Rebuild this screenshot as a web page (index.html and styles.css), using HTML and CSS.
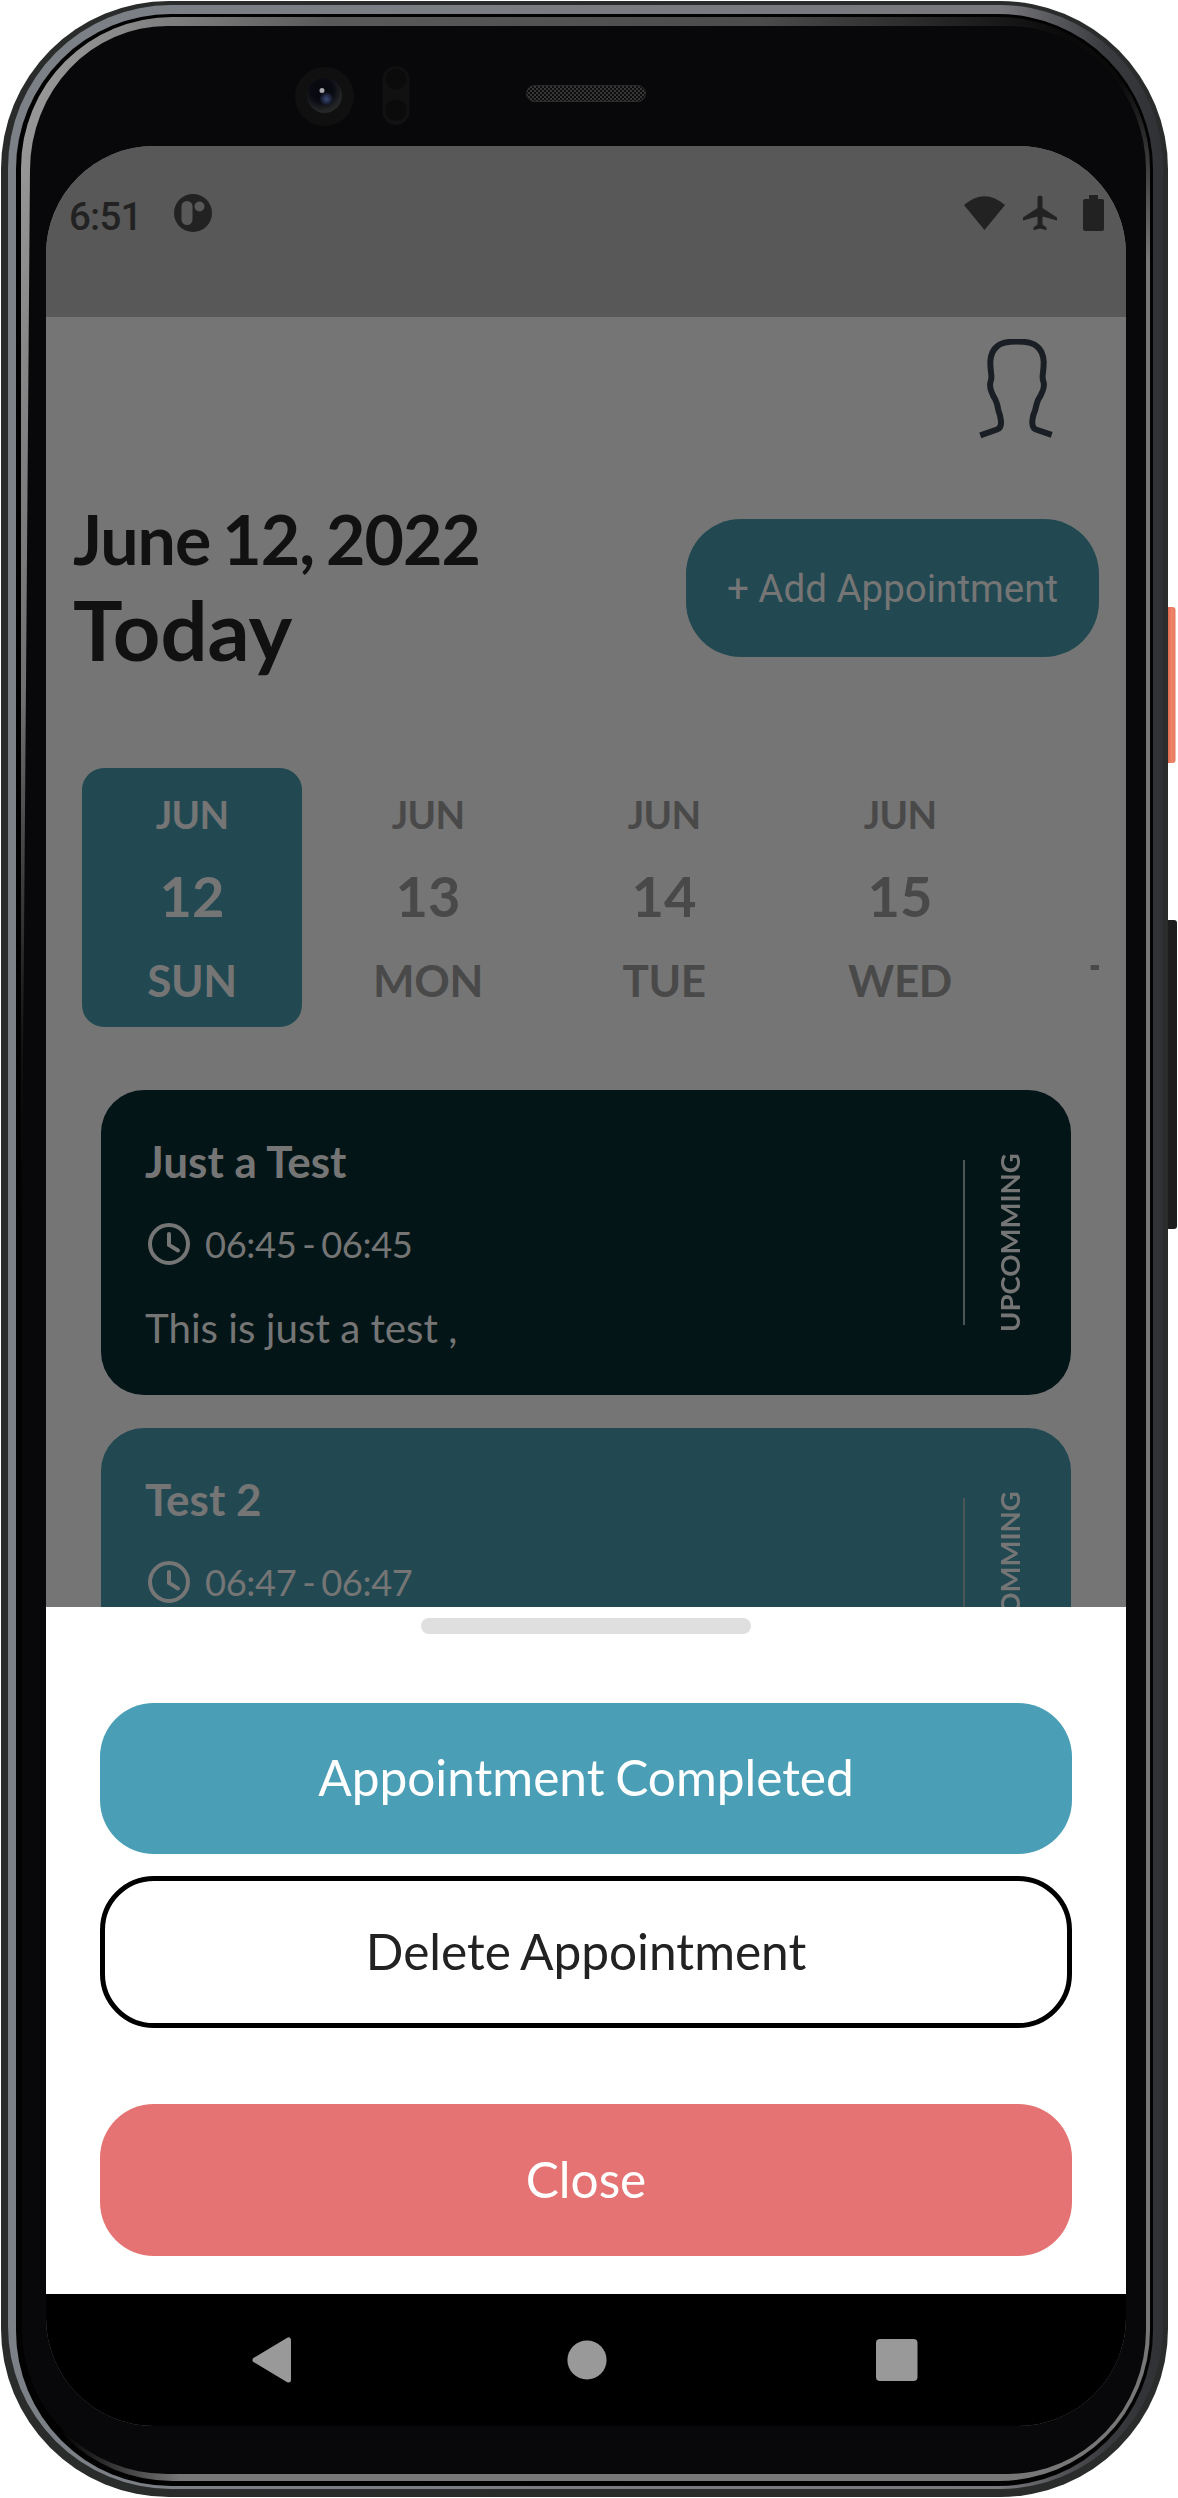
FILE: index.html
```html
<!DOCTYPE html>
<html lang="en">
<head>
<meta charset="utf-8">
<title>Appointments</title>
<link rel="stylesheet" href="styles.css">
</head>
<body>
<main class="phone">
  <svg class="frame" viewBox="0 0 1178 2498" aria-hidden="true">
    <defs>
      <linearGradient id="power" x1="0" x2="1" y1="0" y2="0"><stop offset="0" stop-color="#d9583f"/><stop offset=".5" stop-color="#e0694f"/><stop offset=".75" stop-color="#f08468"/><stop offset="1" stop-color="#e57a60"/></linearGradient>
      <linearGradient id="shine" x1="0" x2="1" y1="0" y2="0.3"><stop offset="0" stop-color="#a2a2a2"/><stop offset=".25" stop-color="#5a5a5a"/><stop offset=".6" stop-color="#4c4c4c"/><stop offset=".85" stop-color="#0a0a0a"/></linearGradient>
      <linearGradient id="fade" x1="0" x2="0" y1="0" y2="1"><stop offset="0" stop-color="#fff"/><stop offset=".28" stop-color="#ccc"/><stop offset=".42" stop-color="#222"/><stop offset=".5" stop-color="#000"/></linearGradient>
      <linearGradient id="fadeRight" gradientUnits="userSpaceOnUse" x1="0" x2="0" y1="80" y2="260"><stop offset="0" stop-color="#000"/><stop offset="1" stop-color="#fff"/></linearGradient>
      <linearGradient id="fadeLeft" gradientUnits="userSpaceOnUse" x1="60" x2="180" y1="0" y2="0"><stop offset="0" stop-color="#000"/><stop offset="1" stop-color="#fff"/></linearGradient>
      <mask id="shineMask"><rect width="1178" height="2498" fill="url(#fade)"/></mask>
      <mask id="edgeMask"><rect x="600" width="578" height="2498" fill="url(#fadeRight)"/><rect x="60" y="2380" width="541" height="118" fill="url(#fadeLeft)"/></mask>
      <linearGradient id="rim" x1="0" x2="1" y1="0" y2="0"><stop offset="0" stop-color="#7c8187"/><stop offset=".86" stop-color="#77777c"/><stop offset=".95" stop-color="#3a3b3e"/><stop offset="1" stop-color="#2f3134"/></linearGradient>
      <radialGradient id="lens" cx=".42" cy=".35" r=".6"><stop offset="0" stop-color="#07080c"/><stop offset=".55" stop-color="#0a0b12"/><stop offset="1" stop-color="#252627"/></radialGradient>
      <radialGradient id="blue"><stop offset="0" stop-color="#3a4874"/><stop offset="1" stop-color="#10131f"/></radialGradient>
      <pattern id="mesh" width="4" height="4" patternUnits="userSpaceOnUse"><rect width="4" height="4" fill="#0c0c0c"/><circle cx="1" cy="1" r=".9" fill="#4a4a4a"/><circle cx="3" cy="3" r=".9" fill="#4a4a4a"/></pattern>
    </defs>
    <rect x="1160" y="607" width="15.500" height="156" rx="3" fill="url(#power)"/>
    <rect x="1160" y="920" width="17" height="309" rx="3" fill="#1d1d1d"/>
    <rect x="1" y="1" width="1167" height="2496" rx="168" fill="#2a2c2c"/>
    <rect x="8" y="5" width="1155" height="2484" rx="163" fill="url(#rim)"/>
    <rect x="16" y="14" width="1137" height="2472" rx="155" fill="#020202"/>
    <rect x="21" y="17" width="1129" height="2464" rx="151" fill="url(#shine)" mask="url(#shineMask)"/>
    <rect x="21" y="17" width="1129" height="2464" rx="151" fill="#777" mask="url(#edgeMask)"/>
    <path d="M30 170A137 144 0 0 1 167 26H1008A138 144 0 0 1 1146 170V2330A138 144 0 0 1 1008 2474H167A145 144 0 0 1 22 2330V1200Z" fill="#08080a"/>
    <circle cx="324.500" cy="96.500" r="29.500" fill="#101011"/>
    <circle cx="324.500" cy="95.500" r="17.500" fill="url(#lens)"/>
    <circle cx="326.500" cy="99" r="6.500" fill="url(#blue)"/>
    <circle cx="322" cy="90.500" r="2.500" fill="#a7a7ad"/>
    <rect x="382.500" y="66" width="27" height="59" rx="13.500" fill="#111112"/>
    <circle cx="396" cy="79" r="10.500" fill="#0b0b0c"/><circle cx="396" cy="110" r="10.500" fill="#0b0b0c"/>
    <rect x="526.500" y="85.500" width="119" height="16" rx="8" fill="url(#mesh)" stroke="#2b2b2b"/>
  </svg>

  <section class="screen">
    <header class="status">
      <span class="clock">6:51</span>
      <svg class="pin" viewBox="0 0 38 38"><circle cx="19" cy="19" r="19" fill="#222"/><rect x="7.500" y="7" width="11" height="24" rx="5.500" fill="#585858"/><circle cx="25.500" cy="12.500" r="5" fill="#585858"/></svg>
      <div class="status-icons">
        <svg width="41" height="34" viewBox="0 0 41 34"><path d="M0 9Q20.500-8.500 41 9L20.500 34Z"/></svg>
        <svg width="34" height="36" viewBox="0 0 34 36"><path d="M17 .5Q19.500 .5 19.500 3.500V13L34 22.500V25.500L19.500 21.500V29.500L23.500 32.600V35.200L17 33.500L10.500 35.200V32.600L14.500 29.500V21.500L0 25.500V22.500L14.500 13V3.500Q14.500 .5 17 .5Z"/></svg>
        <svg width="21" height="36" viewBox="0 0 21 36"><path d="M6 0H15V4H19Q21 4 21 6V34Q21 36 19 36H2Q0 36 0 34V6Q0 4 2 4H6Z"/></svg>
      </div>
    </header>

    <div class="content">
      <div class="profile">
        <svg width="78" height="100" viewBox="0 0 78 100"><path d="M3.300 96.300L20 90.500Q24.500 89 24 82Q23.500 77 21.300 71Q20.500 65 18.500 61Q11.500 49 13.500 43Q15 39 14 33.500Q13.300 28 13.300 22.700Q14 12 20 7.500Q25 2.500 39.700 2.500Q55 2.500 60 7.500Q66 12 66.700 22.700Q66.700 28 66 33.500Q65 39 66.500 43Q68.500 49 61 61Q59.500 65 58.200 71Q55.500 77 55.300 82Q55 89 59 90.500L74.700 95.800" fill="none" stroke="#1a1f26" stroke-width="6"/></svg>
      </div>
      <div class="heading">
        <div><p class="date">June 12, 2022</p><h1 class="today">Today</h1></div>
        <button class="add">+ Add Appointment</button>
      </div>
      <div class="days">
        <div class="day selected"><span class="month">JUN</span><span class="num">12</span><span class="week">SUN</span></div>
        <div class="day"><span class="month">JUN</span><span class="num">13</span><span class="week">MON</span></div>
        <div class="day"><span class="month">JUN</span><span class="num">14</span><span class="week">TUE</span></div>
        <div class="day"><span class="month">JUN</span><span class="num">15</span><span class="week">WED</span></div>
        <div class="day"><span class="week last">THU</span></div>
      </div>
      <div class="tasks">
        <article class="task dark">
          <div class="info">
            <h2>Just a Test</h2>
            <div class="time"><svg width="44" height="44" viewBox="0 0 44 44"><circle cx="22" cy="22" r="19"/><path d="M22 12V23L31 28.500"/></svg><span>06:45 - 06:45</span></div>
            <p class="note">This is just a test ,</p>
          </div>
          <div class="rule"></div>
          <div class="state">UPCOMMING</div>
        </article>
        <article class="task">
          <div class="info">
            <h2>Test 2</h2>
            <div class="time"><svg width="44" height="44" viewBox="0 0 44 44"><circle cx="22" cy="22" r="19"/><path d="M22 12V23L31 28.500"/></svg><span>06:47 - 06:47</span></div>
          </div>
          <div class="rule"></div>
          <div class="state">UPCOMMING</div>
        </article>
      </div>
    </div>

    <div class="sheet">
      <div class="handle"></div>
      <button class="action complete">Appointment Completed</button>
      <button class="action delete">Delete Appointment</button>
      <button class="action close">Close</button>
    </div>

    <nav class="nav">
      <svg width="40" height="46" viewBox="0 0 40 46"><path d="M36.500 3V43L3 23Z" stroke="#999" stroke-width="5" stroke-linejoin="round"/></svg>
      <svg width="40" height="40" viewBox="0 0 40 40"><circle cx="20" cy="20" r="19.600"/></svg>
      <svg width="42" height="42" viewBox="0 0 42 42"><rect width="41.500" height="42" rx="4"/></svg>
    </nav>
  </section>
</main>
</body>
</html>
```
FILE: styles.css
```css
* { box-sizing: border-box; }
body { margin: 0; background: #fff; font-family: Lato, sans-serif; }
h1, h2, p { margin: 0; }
button { border: 0; padding: 0; font-family: Lato, sans-serif; white-space: nowrap; }
svg { display: block; flex: none; }

.phone { position: relative; width: 1178px; height: 2498px; padding: 146px 52px 72px 46px; overflow: hidden; }
.frame { position: absolute; inset: 0; width: 1178px; height: 2498px; }
.screen { position: relative; width: 1080px; height: 2280px; border-radius: 108px; overflow: hidden; display: flex; flex-direction: column; background: #757575; }

.status { height: 171px; flex: none; background: #585858; display: flex; align-items: flex-start; padding: 48px 22px 0 23px; }
.clock { font: 500 38.5px/46px Roboto, sans-serif; color: #222; width: 105px; letter-spacing: -.8px; }
.pin { width: 38px; height: 38px; }
.status-icons { margin-left: auto; display: flex; align-items: center; padding-top: 1px; fill: #222; }
.status-icons svg:nth-child(2) { margin: 0 26px 0 18px; }

.content { height: 1289.5px; flex: none; overflow: hidden; }
.profile { display: flex; justify-content: flex-end; padding: 22px 71px 0 0; height: 180px; }
.heading { display: flex; justify-content: space-between; padding: 0 27px; height: 271px; align-items: flex-start; }
.date { font-size: 68px; font-weight: 700; line-height: 82px; color: #111; margin-top: 1px; white-space: nowrap; letter-spacing: -1px; word-spacing: -3.5px; }
.today { font-size: 83px; font-weight: 700; line-height: 100px; color: #111; margin-top: -1px; }
.add { width: 413px; height: 138px; margin-top: 22px; border-radius: 55px; background: #224952; color: #757575; font: 400 38.5px Roboto, sans-serif; }

.days { display: flex; gap: 16px; margin: 0 27px 0 28px; padding-left: 8px; height: 259px; overflow: hidden; }
.day { flex: none; width: 220px; height: 259px; border-radius: 22px; display: flex; flex-direction: column; align-items: center; color: #494949; font-weight: 700; padding-top: 21px; }
.day.selected { background: #224952; color: #757575; }
.month { font-size: 38.5px; line-height: 50px; letter-spacing: -.7px; }
.num { font-size: 56px; line-height: 66px; margin-top: 24px; }
.week { font-size: 44px; line-height: 54px; margin-top: 24px; letter-spacing: -.4px; }
.week.last { margin-top: 164px; }

.tasks { padding: 63px 55px 0; display: flex; flex-direction: column; gap: 33px; }
.task { height: 305px; flex: none; border-radius: 43px; background: #224952; color: #757575; display: flex; padding: 43px 45px 43px 44px; }
.task.dark { background: #031517; }
.info { flex: 1; }
.info h2 { font-size: 44px; font-weight: 700; line-height: 56px; }
.time { display: flex; align-items: center; gap: 14px; font-size: 36.3px; height: 44px; margin-top: 33px; padding-left: 2px; }
.time span { letter-spacing: -.4px; word-spacing: -3px; margin-top: -1px; }
.time svg { fill: none; stroke: #757575; stroke-width: 4; stroke-linecap: round; }
.note { font-size: 40.3px; line-height: 50px; margin-top: 37px; }
.rule { width: 2px; height: 165px; margin: 27px 28px 0 0; background: #4c5657; }
.state { writing-mode: vertical-rl; transform: rotate(180deg); height: 182px; margin: 19px -1px 0 0; font-size: 27.5px; font-weight: 700; line-height: 34px; text-align: center; }

.sheet { height: 687.5px; flex: none; background: #fff; padding: 11px 54px 0; display: flex; flex-direction: column; align-items: center; }
.handle { width: 330px; height: 16px; border-radius: 8px; background: #dfdfdf; margin-bottom: 69px; }
.action { width: 972px; height: 151.5px; flex: none; border-radius: 54px; font-size: 49.6px; word-spacing: -2px; color: #fff; padding-bottom: 2px; }
.complete { background: #4a9fb7; margin-bottom: 22px; }
.delete { background: #fff; color: #222; border: 5px solid #000; margin-bottom: 76.5px; }
.close { background: #e57373; }

.nav { height: 132px; flex: none; background: #000; display: flex; align-items: center; fill: #999; padding: 0 0 0 206px; }
.nav svg:nth-child(2) { margin: 0 269px 0 275px; }
```
